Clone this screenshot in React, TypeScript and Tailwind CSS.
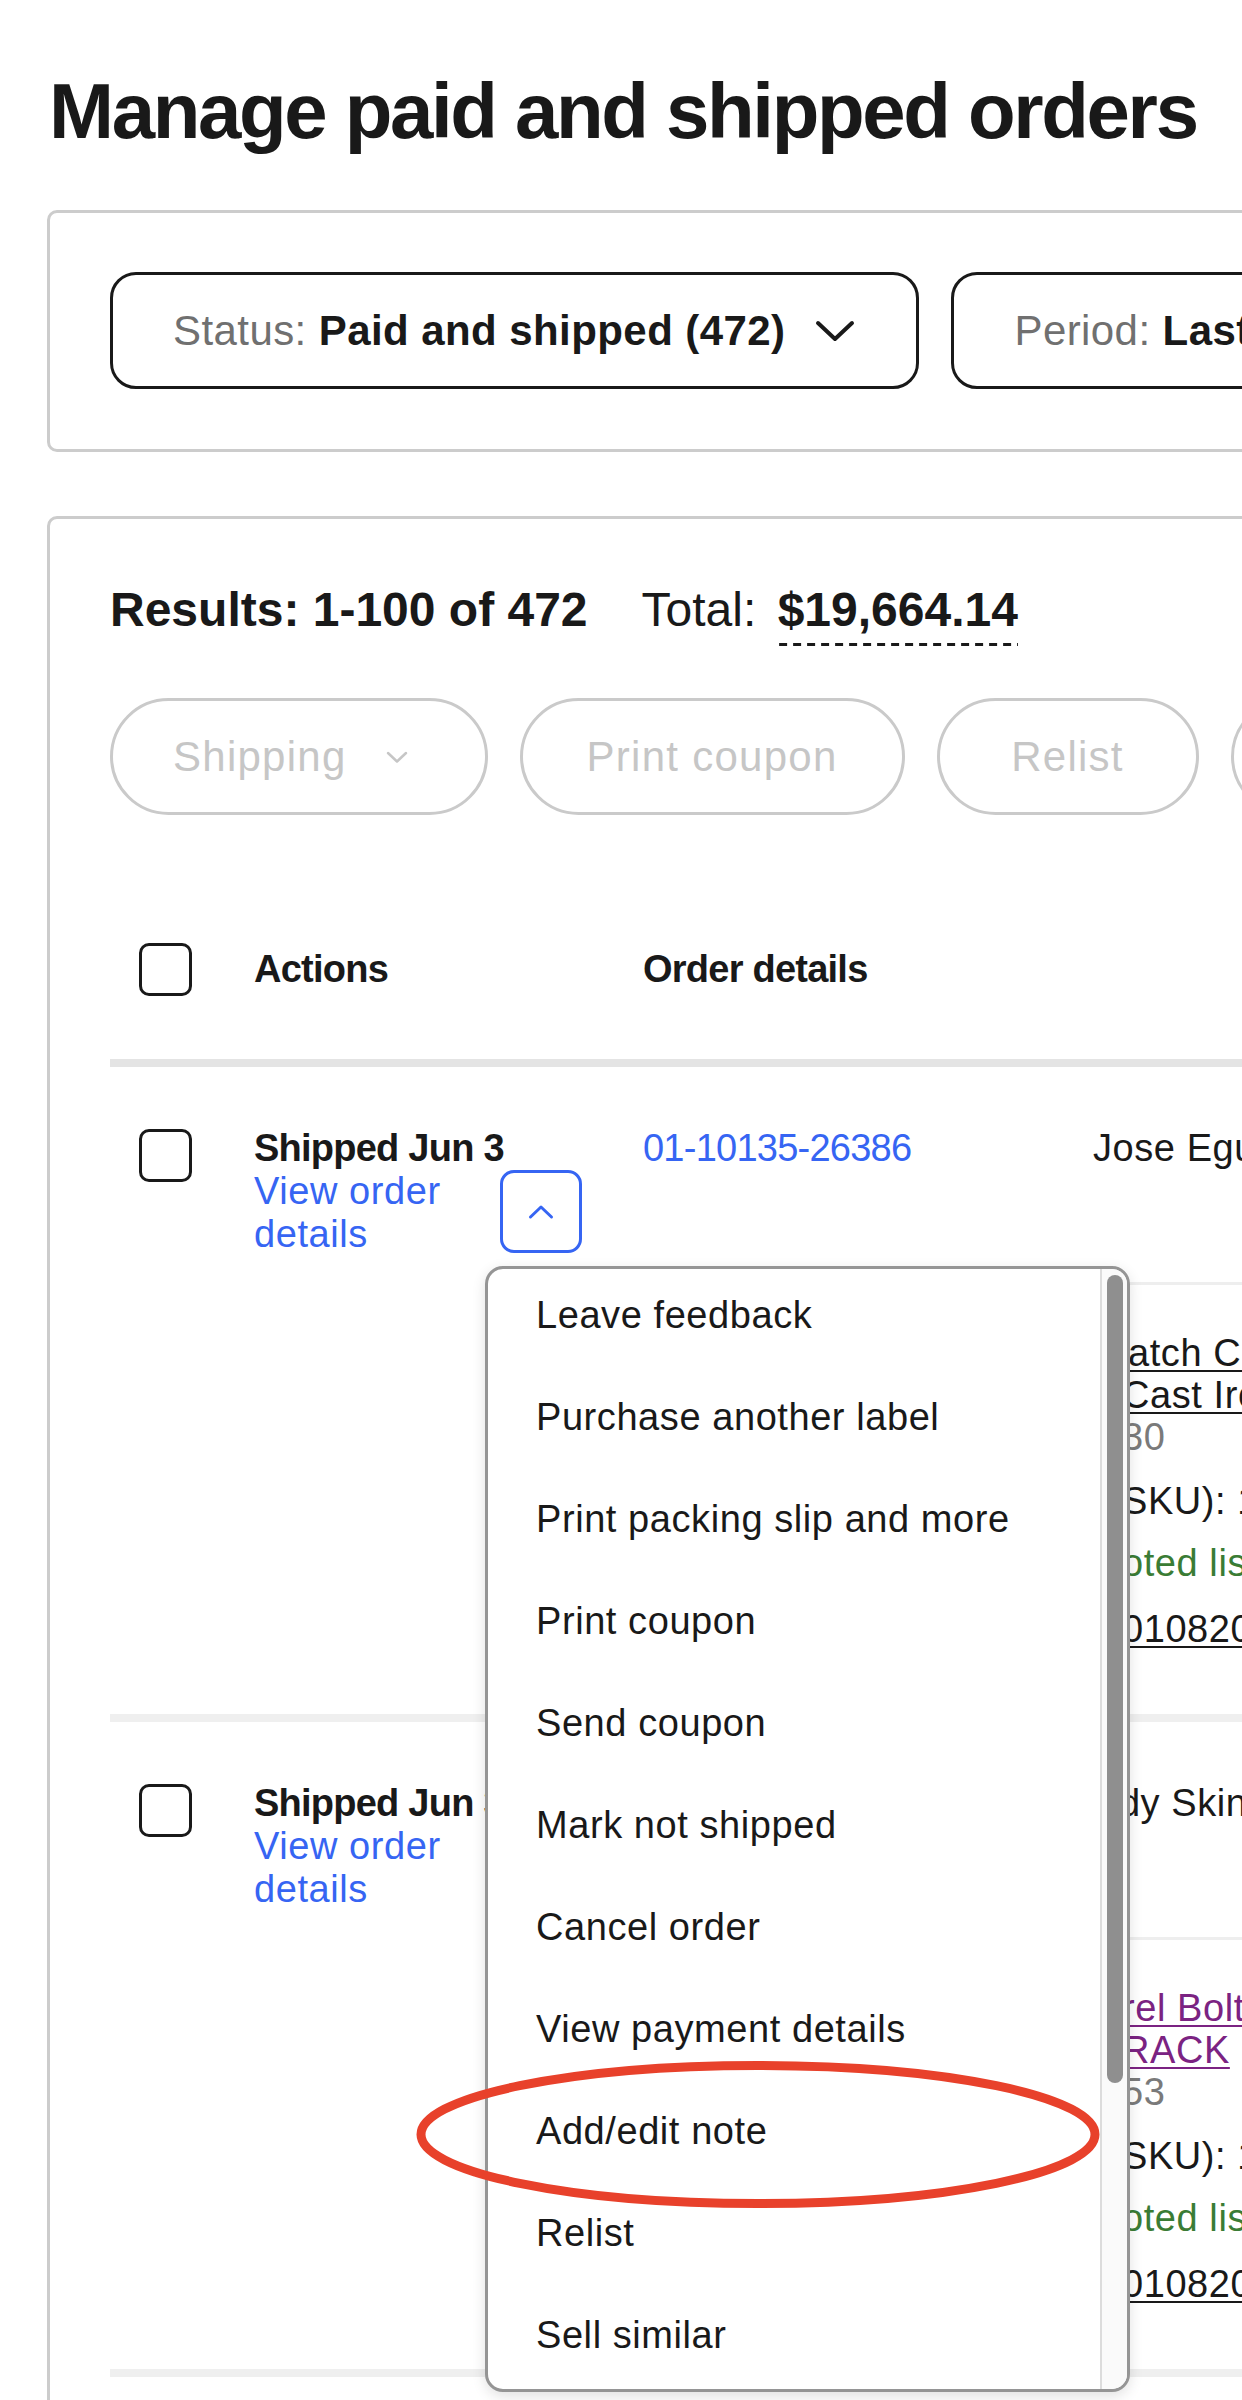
import React from "react";

const menuItems = [
  "Leave feedback",
  "Purchase another label",
  "Print packing slip and more",
  "Print coupon",
  "Send coupon",
  "Mark not shipped",
  "Cancel order",
  "View payment details",
  "Add/edit note",
  "Relist",
  "Sell similar",
];

function ChevronDownBold() {
  return (
    <svg width="42" height="24" viewBox="0 0 42 24" fill="none">
      <path d="M4 4 L21 20 L38 4" stroke="#191919" strokeWidth="4" strokeLinecap="round" strokeLinejoin="round" />
    </svg>
  );
}

function FilterButton({ label, value }: { label: string; value: string }) {
  return (
    <div className="h-[117px] shrink-0 border-[3px] border-[#191919] rounded-[26px] px-[60px] flex items-center gap-[29px] text-[42px] whitespace-nowrap tracking-[0.01em]">
      <span>
        <span className="text-[#707070]">{label} </span>
        <span className="font-bold">{value}</span>
      </span>
      <ChevronDownBold />
    </div>
  );
}

function Menu() {
  return (
    <div className="absolute left-[-15px] top-[96px] z-10 w-[645px] h-[1126px] bg-white border-[3px] border-[#959595] rounded-[18px] overflow-hidden flex shadow-[0_4px_14px_rgba(0,0,0,0.12)]">
      <div className="flex-1 flex flex-col">
        {menuItems.map((m) => (
          <div key={m} className="h-[102px] shrink-0 flex items-center pl-[48px] pb-[10px] text-[38px] tracking-[0.015em] text-[#191919] whitespace-nowrap">
            {m}
          </div>
        ))}
      </div>
      <div className="w-[27px] h-full border-l-[2px] border-[#dcdcdc] bg-[#fafafa]">
        <div className="mt-[6px] ml-[5px] w-[16px] h-[808px] rounded-full bg-[#8f8f8f]" />
      </div>
    </div>
  );
}

type Line = { text: string; cls: string; mt?: string };

function OrderRow({
  orderNo,
  buyer,
  open,
  lines,
}: {
  orderNo: string;
  buyer: string;
  open: boolean;
  lines: Line[];
}) {
  return (
    <div className="flex items-start pt-[60px] border-b-[8px] border-[#efefef] text-[38px]">
      <div className="w-[144px] shrink-0 pl-[29px]">
        <div className="mt-[2px] w-[53px] h-[53px] border-[3px] border-[#191919] rounded-[10px]" />
      </div>
      <div className="w-[389px] shrink-0">
        <div className="font-bold tracking-[-0.02em] leading-[43px] whitespace-nowrap">Shipped Jun 3</div>
        <div className="flex items-start">
          <div className="w-[210px] shrink-0 text-[#3665f3] leading-[43px] tracking-[0.015em]">View order details</div>
          <div className="relative ml-[36px]">
            <div className="w-[82px] h-[83px] border-[3px] border-[#3665f3] rounded-[14px] flex items-center justify-center">
              <svg width="26" height="16" viewBox="0 0 26 16" fill="none">
                {open ? (
                  <path d="M2.5 13 L13 3 L23.5 13" stroke="#3665f3" strokeWidth="3" strokeLinecap="round" strokeLinejoin="round" />
                ) : (
                  <path d="M2.5 3 L13 13 L23.5 3" stroke="#3665f3" strokeWidth="3" strokeLinecap="round" strokeLinejoin="round" />
                )}
              </svg>
            </div>
            {open && <Menu />}
          </div>
        </div>
      </div>
      <div className="flex-1">
        <div className="flex leading-[43px] whitespace-nowrap">
          <div className="w-[450px] shrink-0 text-[#3665f3] tracking-[-0.02em]">{orderNo}</div>
          <div className="tracking-[0.015em]">{buyer}</div>
        </div>
        <div className="mt-[112px] border-t-[3px] border-[#eeeeee] flex">
          <div className="w-[440px] shrink-0" />
          <div className="ml-[39px] pt-[47px] pb-[64px] leading-[42px] whitespace-nowrap tracking-[0.015em]">
            {lines.map((l, i) => (
              <div key={i} className={`${l.cls} ${l.mt ?? ""}`}>
                {l.text}
              </div>
            ))}
          </div>
        </div>
      </div>
    </div>
  );
}

export default function App() {
  return (
    <div className="relative w-[1242px] h-[2400px] overflow-hidden bg-white text-[#191919] font-['Liberation_Sans',Arial,sans-serif]">
      <div className="pl-[47px] w-[2300px]">
        <h1 className="pt-[66px] ml-[2px] text-[78px] leading-[90px] font-bold tracking-[-0.03em] whitespace-nowrap">
          Manage paid and shipped orders
        </h1>

        <div className="mt-[54px] border-[3px] border-[#cccccc] rounded-[10px] pt-[59px] pb-[60px] pl-[60px] flex gap-[32px]">
          <FilterButton label="Status:" value="Paid and shipped (472)" />
          <FilterButton label="Period:" value="Last 90 days" />
        </div>

        <div className="mt-[64px] border-[3px] border-[#cccccc] rounded-[10px] pt-[62px] pl-[60px] h-[2000px]">
          <div className="flex items-start gap-[54px] text-[48px] leading-[58px] whitespace-nowrap">
            <div className="font-bold">Results: 1-100 of 472</div>
            <div>
              Total:{" "}
              <span className="inline-block ml-[8px] font-bold pb-[7px] bg-[linear-gradient(to_right,#191919_60%,transparent_60%)] bg-[length:14px_3px] bg-repeat-x bg-bottom">
                $19,664.14
              </span>
            </div>
          </div>

          <div className="mt-[52px] flex gap-[32px] text-[42px] tracking-[0.03em] text-[#c6c6c6] whitespace-nowrap">
            <div className="h-[117px] shrink-0 rounded-full border-[3px] border-[#cacaca] pl-[60px] pr-[76px] flex items-center gap-[38px]">
              <span>Shipping</span>
              <svg width="24" height="14" viewBox="0 0 24 14" fill="none">
                <path d="M3 3 L12 11.5 L21 3" stroke="#c6c6c6" strokeWidth="2.5" strokeLinecap="round" strokeLinejoin="round" />
              </svg>
            </div>
            <div className="h-[117px] shrink-0 rounded-full border-[3px] border-[#cacaca] px-[64px] flex items-center">
              Print coupon
            </div>
            <div className="h-[117px] w-[262px] shrink-0 rounded-full border-[3px] border-[#cacaca] flex items-center justify-center">
              Relist
            </div>
            <div className="h-[117px] shrink-0 rounded-full border-[3px] border-[#cacaca] px-[60px] flex items-center">
              Sell similar
            </div>
          </div>

          <div className="mt-[128px] flex items-center h-[53px] text-[38px] font-bold tracking-[-0.02em] whitespace-nowrap">
            <div className="w-[144px] shrink-0 pl-[29px]">
              <div className="w-[53px] h-[53px] border-[3px] border-[#191919] rounded-[10px]" />
            </div>
            <div className="w-[389px] shrink-0">Actions</div>
            <div className="w-[450px] shrink-0">Order details</div>
          </div>
          <div className="mt-[63px] h-[8px] bg-[#e4e4e4]" />

          <OrderRow
            orderNo="01-10135-26386"
            buyer="Jose Eguiarte"
            open={true}
            lines={[
              { text: "atch Clamp Door Lock", cls: "pl-[6px] underline decoration-[2px] underline-offset-[4px]" },
              { text: "Cast Iron Hardware", cls: "underline decoration-[2px] underline-offset-[4px]" },
              { text: "30", cls: "text-[#7a7a7a]" },
              { text: "SKU): 1", cls: "", mt: "mt-[22px]" },
              { text: "oted listing", cls: "text-[#3a7c35]", mt: "mt-[20px]" },
              { text: "010820551234", cls: "underline decoration-[2px] underline-offset-[4px]", mt: "mt-[24px]" },
            ]}
          />
          <OrderRow
            orderNo="01-10134-88213"
            buyer="Ady Skinner"
            open={false}
            lines={[
              { text: "rel Bolt Door Latch", cls: "text-[#7b2382] underline decoration-[2px] underline-offset-[4px]" },
              { text: "RACK", cls: "text-[#7b2382] underline decoration-[2px] underline-offset-[4px]" },
              { text: "53", cls: "text-[#7a7a7a]" },
              { text: "SKU): 1", cls: "", mt: "mt-[22px]" },
              { text: "oted listing", cls: "text-[#3a7c35]", mt: "mt-[20px]" },
              { text: "010820551298", cls: "underline decoration-[2px] underline-offset-[4px]", mt: "mt-[24px]" },
            ]}
          />
        </div>
      </div>

      <svg
        className="absolute left-[410px] top-[2052px] z-20 pointer-events-none"
        width="700"
        height="165"
        viewBox="0 0 700 165"
        fill="none"
      >
        <ellipse cx="348" cy="82.5" rx="337" ry="69" stroke="#e8412b" strokeWidth="9" />
      </svg>
    </div>
  );
}
